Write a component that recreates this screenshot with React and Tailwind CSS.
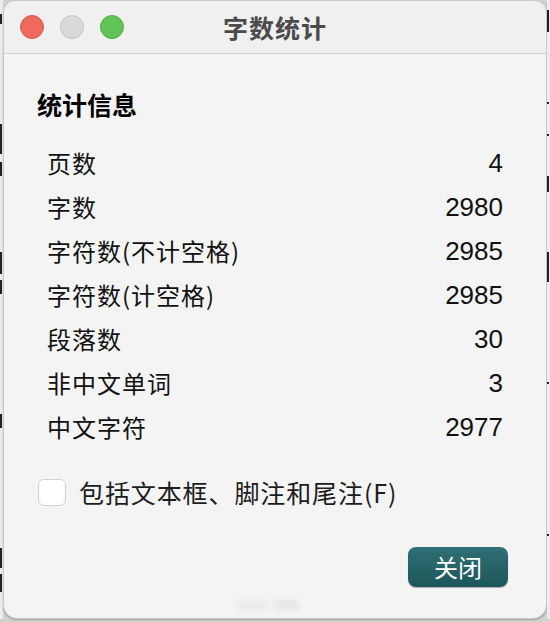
import React from "react";

const rows = [
  ["页数", "4"],
  ["字数", "2980"],
  ["字符数(不计空格)", "2985"],
  ["字符数(计空格)", "2985"],
  ["段落数", "30"],
  ["非中文单词", "3"],
  ["中文字符", "2977"],
];

const cjk = { fontFamily: '"Noto Sans CJK SC", "Noto Sans", sans-serif' };
const num = { fontFamily: '"Liberation Sans", Arial, sans-serif' };

function Strip({ marks }) {
  return (
    <div className="flex w-[3px] shrink-0 flex-col overflow-hidden bg-[#ececec]">
      {marks.map(([gap, h], i) => (
        <div key={i} className="flex flex-col">
          <div style={{ height: gap }} />
          <div className="w-[2px] bg-[#222222]" style={{ height: h }} />
        </div>
      ))}
    </div>
  );
}

export default function App() {
  return (
    <div className="flex h-[622px] w-[550px] flex-col overflow-hidden bg-[#d2d2d2]">
      <div className="flex h-[619px] w-full">
        <Strip
          marks={[
            [14, 10],
            [100, 30],
            [8, 14],
            [76, 22],
            [6, 14],
            [120, 14],
            [120, 20],
            [6, 18],
          ]}
        />
        <div className="flex w-[544px] shrink-0 flex-col rounded-t-[12px] rounded-b-[14px] border border-[#c9c9c9] bg-[#f4f4f4] shadow-[0_1px_2px_rgba(0,0,0,0.25)]">
          {/* title bar */}
          <div className="relative flex h-[53px] shrink-0 items-center rounded-t-[12px] border-b border-[#d4d4d4] bg-[#f1f0f1] pl-[16px]">
            <div className="flex gap-[16px]">
              <div className="h-[24px] w-[24px] rounded-full border border-[#d9554a] bg-[#ee6a5f]" />
              <div className="h-[24px] w-[24px] rounded-full border border-[#c4c4c4] bg-[#d9d9d9]" />
              <div className="h-[24px] w-[24px] rounded-full border border-[#4fae43] bg-[#61c454]" />
            </div>
            <div className="absolute inset-0 flex items-center justify-center">
              <span
                className="text-[25px] font-bold leading-none tracking-[1px] text-[#4b4b4b]"
                style={cjk}
              >
                字数统计
              </span>
            </div>
          </div>

          {/* content */}
          <div className="flex flex-1 flex-col pl-[33px] pr-[38px] pt-[34px]">
            <div
              className="h-[32px] text-[25px] font-bold leading-[32px] text-black"
              style={cjk}
            >
              统计信息
            </div>
            <div className="mt-[21px] flex flex-col pl-[10px] pr-[5px]">
              {rows.map(([label, value]) => (
                <div
                  key={label}
                  className="flex h-[44px] items-center justify-between"
                >
                  <span
                    className="text-[24px] leading-none tracking-[1px] text-[#111111]"
                    style={cjk}
                  >
                    {label}
                  </span>
                  <span
                    className="text-[26px] leading-none text-[#111111]"
                    style={num}
                  >
                    {value}
                  </span>
                </div>
              ))}
            </div>

            <div className="mt-[29px] flex h-[28px] items-center gap-[13px] pl-[1px]">
              <div className="h-[27px] w-[28px] rounded-[6px] border border-[#d2d2d2] bg-white" />
              <span
                className="text-[25px] leading-none tracking-[0.9px] text-[#1c1c1c]"
                style={cjk}
              >
                包括文本框、脚注和尾注(F)
              </span>
            </div>

            <div className="mt-[41px] flex justify-end">
              <button
                className="flex h-[40px] w-[100px] items-center justify-center rounded-[8px] bg-gradient-to-b from-[#2f7076] to-[#1c5659] text-[24px] leading-none text-white shadow-[0_1px_1px_rgba(0,0,0,0.3)]"
                style={cjk}
              >
                关闭
              </button>
            </div>

            <div className="mt-[12px] flex justify-center gap-[6px] pr-[10px]">
              <div className="h-[12px] w-[30px] rounded-sm bg-[#ececec] blur-[2px]" />
              <div className="h-[12px] w-[26px] rounded-sm bg-[#e8e8e8] blur-[2px]" />
            </div>
          </div>
        </div>
        <Strip
          marks={[
            [10, 22],
            [70, 2],
            [30, 2],
            [40, 16],
            [60, 30],
            [100, 2],
            [150, 2],
            [90, 2],
          ]}
        />
      </div>
    </div>
  );
}
